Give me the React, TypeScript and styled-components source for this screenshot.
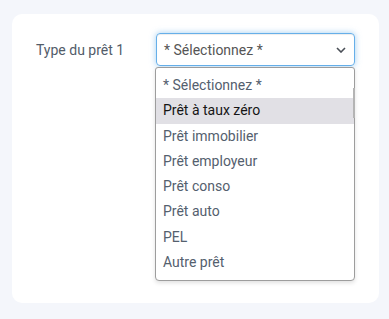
import React from "react";
import styled, { createGlobalStyle } from "styled-components";

const options = [
  "* Sélectionnez *",
  "Prêt à taux zéro",
  "Prêt immobilier",
  "Prêt employeur",
  "Prêt conso",
  "Prêt auto",
  "PEL",
  "Autre prêt",
];

const App: React.FunctionComponent<{}> = () => {
  return (
    <>
      <GlobalStyle />
      <CardStyled>
        <RowStyled>
          <LabelStyled>Type du prêt 1</LabelStyled>
          <FieldStyled>
            <SelectStyled>
              <span>{options[0]}</span>
              <svg width="10" height="6" viewBox="0 0 10 6">
                <polyline
                  points="1,1 5,5 9,1"
                  fill="none"
                  stroke="#4a4f57"
                  strokeWidth="1.6"
                />
              </svg>
            </SelectStyled>
            <ListStyled>
              {options.map((o, i) => (
                <OptionStyled key={o} active={i === 1}>
                  {o}
                </OptionStyled>
              ))}
              <ThumbStyled />
            </ListStyled>
          </FieldStyled>
        </RowStyled>
      </CardStyled>
    </>
  );
};

const GlobalStyle = createGlobalStyle`
  body {
    margin: 0;
    background: #f4f6fb;
    font-family: Roboto, "Liberation Sans", Arial, sans-serif;
  }
`;

const CardStyled = styled.div`
  margin: 14px 10px 0 12px;
  height: 289px;
  background: #fff;
  border-radius: 10px;
  padding: 19px 24px 0 24px;
  box-sizing: border-box;
`;

const RowStyled = styled.div`
  display: flex;
  align-items: center;
`;

const LabelStyled = styled.div`
  width: 120px;
  font-size: 14px;
  color: #525c69;
`;

const FieldStyled = styled.div`
  position: relative;
  width: 199px;
`;

const SelectStyled = styled.div`
  display: flex;
  align-items: center;
  justify-content: space-between;
  height: 33px;
  box-sizing: border-box;
  padding: 0 8px 0 7px;
  border: 1px solid #66afe9;
  border-radius: 4px;
  box-shadow: inset 0 1px 1px rgba(0, 0, 0, 0.075),
    0 0 6px rgba(102, 175, 233, 0.6);
  font-size: 14px;
  color: #555;
  svg {
    margin-top: 1px;
  }
`;

const ListStyled = styled.div`
  position: absolute;
  top: 34px;
  left: -1px;
  width: 200px;
  box-sizing: border-box;
  padding: 5px 0 5px;
  background: #fff;
  border: 1px solid #9d9d9d;
  border-radius: 3px 3px 4px 4px;
  box-shadow: 0 2px 4px rgba(0, 0, 0, 0.12);
`;

const OptionStyled = styled.div<{ active?: boolean }>`
  height: 25.3px;
  line-height: 25.3px;
  padding-left: 7px;
  font-size: 14px;
  color: ${p => (p.active ? "#151515" : "#54606e")};
  background: ${p => (p.active ? "#e1e0e5" : "transparent")};
`;

const ThumbStyled = styled.div`
  position: absolute;
  right: -1px;
  top: 20px;
  width: 2px;
  height: 30px;
  background: #b4b4b4;
`;

export default App;
